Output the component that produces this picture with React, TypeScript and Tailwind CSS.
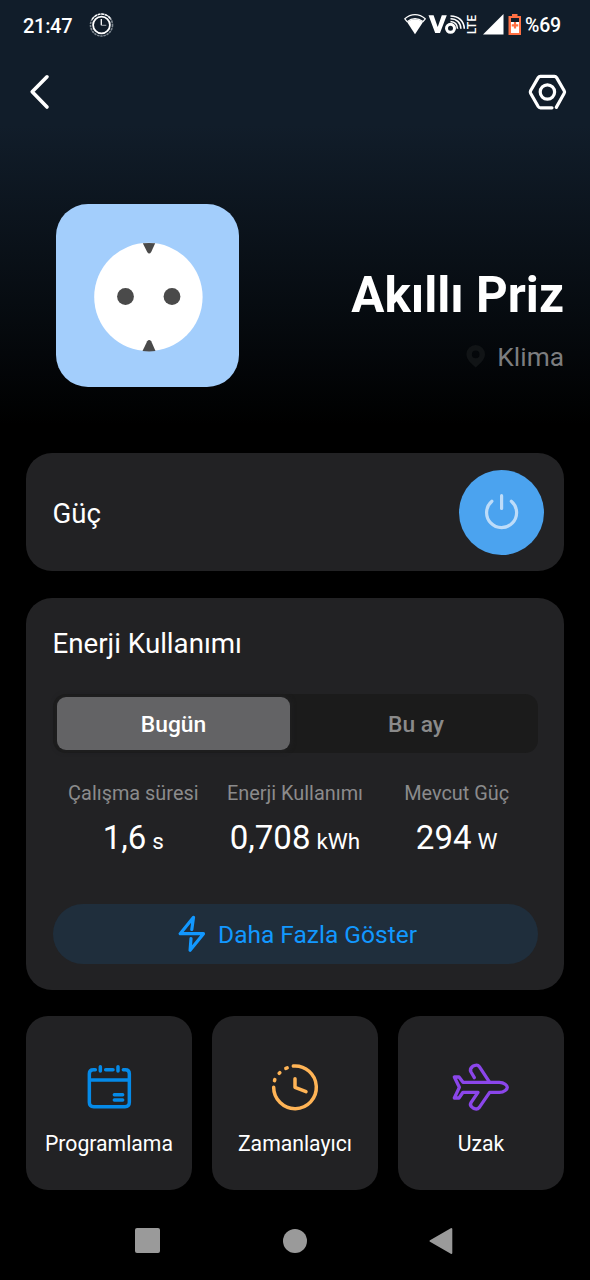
import { useState } from 'react'
import type { ReactNode } from 'react'

function StatusBar() {
  return (
    <div className="flex h-[50px] items-center pl-[23px] pr-[30px] text-[20px] font-medium text-white">
      <span className="w-[50px] pt-px tracking-[-0.3px]">21:47</span>
      <svg className="ml-[16px]" width="25" height="25" viewBox="0 0 25 25" fill="none">
        <circle cx="12.5" cy="12" r="11" stroke="#7f8890" strokeWidth="1.6" strokeDasharray="2.4 0.8" />
        <path d="M3 6.5A11 11 0 0 1 22 6.5" stroke="#fff" strokeWidth="1.4" strokeDasharray="3 0.7" />
        <circle cx="12.5" cy="12" r="8.4" stroke="#fff" strokeWidth="1.8" />
        <path d="M12.3 6v6.3" stroke="#fff" strokeWidth="1.3" />
        <path d="M12.3 12.3h5" stroke="#a5abb1" strokeWidth="1" />
      </svg>
      <svg className="ml-auto" width="118" height="26" viewBox="403 12 118 26" fill="none">
        <path d="M404.8 18.8C411 13.3 419 13.3 425.3 18.8L423 21.6C418 17.8 412 17.8 407.1 21.6Z" stroke="#fff" strokeWidth="1.2" strokeLinejoin="round" fill="#111d2a" />
        <path d="M407.2 22.2C412 18.4 418 18.4 422.9 22.2L415 34.2Z" fill="#fff" />
        <path d="M428.5 15.2H433.6L437.7 27L441.8 15.2H446.8L440 33H435.2Z" fill="#fff" />
        <circle cx="450.5" cy="28.3" r="4" stroke="#fff" strokeWidth="3" />
        <path d="M450.5 21.5C454.5 21.7 457.3 24.5 457.5 28.7M450.5 18.7C456.5 18.7 460.7 22.5 460.9 28.7M450.5 16C458.5 16 463.9 21 464.3 28.7" stroke="#fff" strokeWidth="1.6" />
        <text transform="translate(476 34.3) rotate(-90)" fill="#fff" fontSize="12.5" fontWeight="500" textLength="19.5" lengthAdjust="spacingAndGlyphs">LTE</text>
        <path d="M483 34.6L503.5 14V34.6Z" fill="#fff" />
        <path d="M512 14h5.5v2h3.500v19h-12.500V16h3.500Z" fill="#ff7043" />
        <path d="M511 18h8v4h-8Z" fill="#111d2a" />
        <path d="M511 22h8v11h-8Z" fill="#fff" />
        <path d="M515 22v6.6M511.7 25.3h6.6" stroke="#ff7043" strokeWidth="2.2" />
      </svg>
      <span className="ml-[4px] w-[35px] whitespace-nowrap pt-[2px] text-[19.5px] tracking-[-0.2px]">%69</span>
    </div>
  )
}

function Header() {
  return (
    <div className="flex h-[84px] items-center justify-between pl-[28px] pr-[22px]">
      <button>
        <svg width="24" height="40" viewBox="28 72 24 40" fill="none">
          <path d="M47 76.8L32.2 91.8L47 107" stroke="#fff" strokeWidth="3.6" strokeLinecap="round" strokeLinejoin="round" />
        </svg>
      </button>
      <button>
        <svg width="42" height="40" viewBox="526 72 42 40" fill="none" stroke="#fff" strokeWidth="3.2" strokeLinecap="round" strokeLinejoin="round">
          <path d="M552 107.8H540.4Q539 107.8 538.2 106.5L530.6 93.2Q530 92 530.6 90.8L538.2 77.6Q539 76.3 540.4 76.3H554.4Q555.8 76.3 556.6 77.6L564.2 90.8Q564.9 92 564.2 93.2L556.3 107.4" />
          <circle cx="547.4" cy="92" r="7.2" />
        </svg>
      </button>
    </div>
  )
}

function SocketImage() {
  return (
    <svg className="shrink-0" width="183" height="184" viewBox="0 0 183 184">
      <rect width="183" height="183" rx="32" fill="#a3cefc" />
      <circle cx="92.4" cy="93" r="54.2" fill="#fff" />
      <circle cx="69.5" cy="92.5" r="8.4" fill="#4a4a4a" />
      <circle cx="116" cy="92.5" r="8.4" fill="#4a4a4a" />
      <path d="M86.8 39.3Q93 38.6 99.2 39.3L95.2 48Q93.2 51 91.2 48Z" fill="#4a4a4a" />
      <path d="M86.5 147L91.2 137.3Q93.2 134.6 95.2 137.3L99.5 147Q93 147.8 86.5 147Z" fill="#4a4a4a" />
    </svg>
  )
}

function Stat({ label, value, unit }: { label: string; value: string; unit: string }) {
  return (
    <div className="flex flex-col items-center whitespace-nowrap">
      <span className="text-[19.9px] leading-[28px] text-[#8b8b8c]">{label}</span>
      <span className="mt-[10px] text-[33px] leading-[40px] text-white">
        {value}
        <span className="ml-[6px] text-[22.5px]">{unit}</span>
      </span>
    </div>
  )
}

function Tile({ label, children }: { label: string; children: ReactNode }) {
  return (
    <button className="flex h-[174px] flex-col items-center rounded-[22px] bg-[#222224] pt-[45.5px]">
      {children}
      <span className="mt-[17.5px] text-[21.2px] leading-[30px] text-white">{label}</span>
    </button>
  )
}

export default function App() {
  const [tab, setTab] = useState('Bugün')

  return (
    <div className="flex h-[1280px] w-[590px] flex-col overflow-hidden bg-black bg-[linear-gradient(180deg,#111d2a_0px,#111d2a_125px,#000_425px)] font-['Roboto',sans-serif]">
      <StatusBar />
      <Header />

      <div className="flex h-[319px] justify-between pl-[56px] pr-[26px] pt-[70px]">
        <SocketImage />
        <div className="flex flex-col items-end pt-[63px]">
          <h1 className="text-[49.3px] font-bold leading-[56px] text-white">Akıllı Priz</h1>
          <div className="mt-[16px] flex items-center text-[26.3px] leading-[36px] text-[#7c7d7f]">
            <svg className="mb-[3px] mr-[11px]" width="20" height="24" viewBox="466 344 20 24">
              <path fillRule="evenodd" d="M475.7 345a9.3 9.3 0 0 1 9.3 9.3c0 5-5 9.7-9.3 13.2c-4.3-3.5-9.3-8.2-9.3-13.2a9.3 9.3 0 0 1 9.3-9.3Zm0 5.6a3.8 3.8 0 1 0 0 7.6a3.8 3.8 0 1 0 0-7.6Z" fill="#111416" />
            </svg>
            Klima
          </div>
        </div>
      </div>

      <div className="mx-[26px] flex h-[118px] items-center justify-between rounded-[26px] bg-[#222224] pl-[26.5px] pr-[20px]">
        <span className="pt-[4px] text-[27.6px] text-white">Güç</span>
        <button className="flex size-[85px] items-center justify-center rounded-full bg-[#4ba3ef]">
          <svg width="40" height="40" viewBox="481.8 492 40 40" fill="none" stroke="#bddcf9" strokeWidth="3.2" strokeLinecap="round">
            <path d="M491.7 501.2A15 15 0 1 0 511.1 501.2M501.4 495.7V508.5" />
          </svg>
        </button>
      </div>

      <div className="mx-[26px] mt-[26.5px] flex h-[392.5px] flex-col rounded-[26px] bg-[#222224] px-[26.5px]">
        <h2 className="mt-[28px] text-[27.7px] leading-[36px] text-white">Enerji Kullanımı</h2>

        <div className="mt-[32.5px] flex h-[59px] rounded-[13px] bg-[#1b1b1b] px-[4.5px] pb-[3.5px] pt-[3px]">
          {['Bugün', 'Bu ay'].map((name) => (
            <button
              key={name}
              onClick={() => setTab(name)}
              className={
                tab === name
                  ? 'w-[233px] rounded-[9px] bg-[#636365] pt-[3px] text-[22.8px] font-medium text-white shadow-[0_0_4px_2px_#1f1f20]'
                  : 'flex-1 pl-[9px] pt-[3px] text-[22.8px] font-medium text-[#8a8a8a]'
              }
            >
              {name}
            </button>
          ))}
        </div>

        <div className="mt-[27px] grid grid-cols-3">
          <Stat label="Çalışma süresi" value="1,6" unit="s" />
          <Stat label="Enerji Kullanımı" value="0,708" unit="kWh" />
          <Stat label="Mevcut Güç" value="294" unit="W" />
        </div>

        <button className="mt-[43px] flex h-[60px] items-center justify-center rounded-full bg-[#1f2e3c] pl-[5px] text-[24.5px] text-[#1298ff]">
          <svg className="mr-[12px]" width="28" height="38" viewBox="178.5 915 28 38" fill="none" stroke="currentColor" strokeWidth="3.2" strokeLinecap="round" strokeLinejoin="round">
            <path d="M192.3 929.5L194 917.3L180.7 933.7H204L190.6 950.3L191.5 938.5" />
          </svg>
          <span className="pt-[3px]">Daha Fazla Göster</span>
        </button>
      </div>

      <div className="mx-[26px] mt-[26px] grid grid-cols-3 gap-[20px]">
        <Tile label="Programlama">
          <svg width="60" height="50" viewBox="177 155 180 150" fill="none" stroke="#058ae8" strokeWidth="10.5" strokeLinecap="round">
            <path d="M226 178H220Q208 178 208 190V276Q208 289 221 289H315Q328 289 328 276V190Q328 178 316 178H310M208 209H328M257 178H279" />
            <path d="M241 169V182M294 169V182M283 253H308M283 269H308" />
          </svg>
        </Tile>
        <Tile label="Zamanlayıcı">
          <svg width="60" height="50" viewBox="180 155 180 150" fill="none" stroke="#ffb456" strokeWidth="10.5" strokeLinecap="round" strokeLinejoin="round">
            <path d="M265 167.2A64 64 0 1 1 206 231M270 205V231L303 244" />
            <path d="M242.5 174L246.5 172.5M222.5 189L224.5 187M208.5 211L209.5 208" />
          </svg>
        </Tile>
        <Tile label="Uzak">
          <svg width="60" height="50" viewBox="183 155 180 150" fill="none" stroke="#8b46ea" strokeWidth="10" strokeLinecap="round" strokeLinejoin="round">
            <path d="M253 202L243 185Q238 175 248 168L254 165.5Q263 162 268 169L299 216" />
            <path d="M219 216H328C343 216 352 226 352 231C352 236 343 246 328 246H299L268 291Q262 298 254 295L248 292Q238 286 243 277L264 246H219L207 263H193L208 231L193 200H207Z" />
          </svg>
        </Tile>
      </div>

      <div className="flex flex-1 items-center pl-[135px] pt-[11px]">
        <div className="size-[25px] rounded-[2px] bg-[#9a9a9a]" />
        <div className="ml-[123px] size-[24px] rounded-full bg-[#9a9a9a]" />
        <svg className="ml-[122px]" width="24" height="28" viewBox="0 0 24 28">
          <path d="M1.5 14L22.3 2V26Z" fill="#9a9a9a" stroke="#9a9a9a" strokeWidth="2" strokeLinejoin="round" />
        </svg>
      </div>
    </div>
  )
}
